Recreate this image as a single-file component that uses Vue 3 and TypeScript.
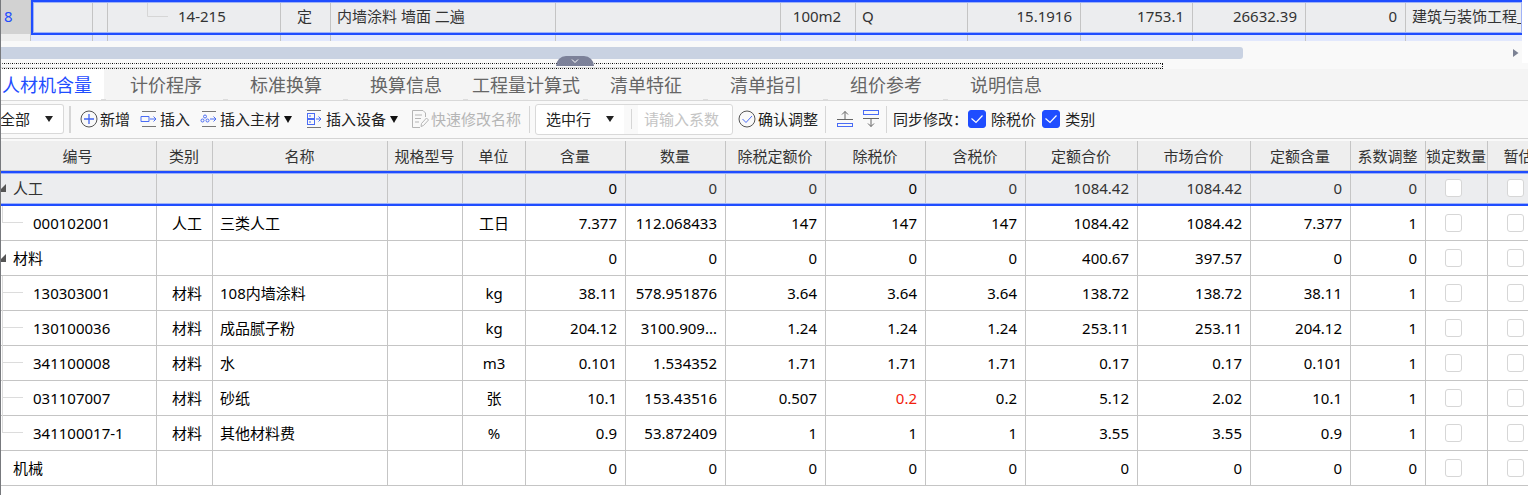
<script setup lang="ts">
import { ref } from 'vue'

interface Row {
  code: string
  group: boolean
  expanded?: boolean
  last?: boolean
  kind: string
  name: string
  unit: string
  values: string[]
}

const topCells = [
  { text: '', cls: 'w62' },
  { text: '', cls: 'w15' },
  { text: '14-215', cls: 'code' },
  { text: '定', cls: 'w50 center' },
  { text: '内墙涂料 墙面 二遍', cls: 'w225' },
  { text: '', cls: 'w225' },
  { text: '100m2', cls: 'w75 center' },
  { text: 'Q', cls: 'w112' },
  { text: '15.1916', cls: 'w113 right' },
  { text: '1753.1', cls: 'w112 right' },
  { text: '26632.39', cls: 'w113 right' },
  { text: '0', cls: 'w100 right' },
  { text: '建筑与装饰工程_', cls: 'rest' },
]

const tabs = ['人材机含量', '计价程序', '标准换算', '换算信息', '工程量计算式', '清单特征', '清单指引', '组价参考', '说明信息']
const active = ref('人材机含量')

const widths = [157, 56, 175, 75, 63, 100, 100, 100, 100, 100, 112, 113, 100, 75, 62, 63]
const heads = ['编号', '类别', '名称', '规格型号', '单位', '含量', '数量', '除税定额价', '除税价', '含税价', '定额合价', '市场合价', '定额含量', '系数调整', '锁定数量', '暂估']

const rows = ref<Row[]>([
  { code: '人工', group: true, expanded: true, kind: '', name: '', unit: '', values: ['0', '0', '0', '0', '0', '1084.42', '1084.42', '0', '0'] },
  { code: '000102001', group: false, last: true, kind: '人工', name: '三类人工', unit: '工日', values: ['7.377', '112.068433', '147', '147', '147', '1084.42', '1084.42', '7.377', '1'] },
  { code: '材料', group: true, expanded: true, kind: '', name: '', unit: '', values: ['0', '0', '0', '0', '0', '400.67', '397.57', '0', '0'] },
  { code: '130303001', group: false, kind: '材料', name: '108内墙涂料', unit: 'kg', values: ['38.11', '578.951876', '3.64', '3.64', '3.64', '138.72', '138.72', '38.11', '1'] },
  { code: '130100036', group: false, kind: '材料', name: '成品腻子粉', unit: 'kg', values: ['204.12', '3100.909...', '1.24', '1.24', '1.24', '253.11', '253.11', '204.12', '1'] },
  { code: '341100008', group: false, kind: '材料', name: '水', unit: 'm3', values: ['0.101', '1.534352', '1.71', '1.71', '1.71', '0.17', '0.17', '0.101', '1'] },
  { code: '031107007', group: false, kind: '材料', name: '砂纸', unit: '张', values: ['10.1', '153.43516', '0.507', '0.2', '0.2', '5.12', '2.02', '10.1', '1'] },
  { code: '341100017-1', group: false, last: true, kind: '材料', name: '其他材料费', unit: '%', values: ['0.9', '53.872409', '1', '1', '1', '3.55', '3.55', '0.9', '1'] },
  { code: '机械', group: true, kind: '', name: '', unit: '', values: ['0', '0', '0', '0', '0', '0', '0', '0', '0'] },
])

const syncPrice = ref(true)
const syncKind = ref(true)
</script>

<template>
  <main class="app">
    <section class="upper">
      <div class="sheet">
        <div class="gutter"><div class="rowno">8</div></div>
        <div class="track">
          <div class="line selected">
            <div v-for="(c, i) in topCells" :key="i" class="cell" :class="c.cls">
              <svg v-if="i === 2" class="branch" width="21" height="16" viewBox="0 0 21 16"><path d="M.5 0V15.500H21" fill="none" stroke="#d6d6d6" /></svg>
              <span>{{ c.text }}</span>
            </div>
          </div>
          <div class="line next">
            <div v-for="(c, i) in topCells" :key="i" class="cell" :class="c.cls"></div>
          </div>
        </div>
      </div>
      <div class="hscroll">
        <div class="thumb"></div>
        <svg width="6" height="8" viewBox="0 0 6 8"><path d="M0 0L5.500 4L0 8Z" fill="#7c8294" /></svg>
      </div>
    </section>

    <div class="splitter">
      <div class="dots"></div>
      <button class="collapse" type="button" aria-label="收起">
        <svg width="8" height="5" viewBox="0 0 8 5"><path d="M1 .5L4 3.500L7 .5" fill="none" stroke="#fff" /></svg>
      </button>
    </div>

    <nav class="tabs">
      <button v-for="t in tabs" :key="t" type="button" class="tab" :class="{ on: t === active }" @click="active = t">{{ t }}</button>
    </nav>

    <div class="toolbar">
      <div class="select filter">
        <select aria-label="类别筛选"><option>全部</option></select>
        <svg width="8" height="6" viewBox="0 0 8 6"><path d="M0 0H8L4 6Z" fill="#222" /></svg>
      </div>
      <i class="sep thick"></i>
      <button type="button" class="tool add">
        <svg width="18" height="18" viewBox="0 0 18 18" fill="none"><circle cx="9" cy="9" r="8" stroke="#555" /><path d="M9 4V14M4 9H14" stroke="#3f63f2" stroke-width="1.300" /></svg>新增
      </button>
      <button type="button" class="tool ins">
        <svg width="18" height="18" viewBox="0 0 18 18" fill="none"><path d="M2 1.500H16M2 16.500H16" stroke="#777" /><path d="M1 6.500H9V11.500H1ZM10 9H16M13.500 6.500L16 9L13.500 11.500" stroke="#4a6cf5" /></svg>插入
      </button>
      <button type="button" class="tool main">
        <svg width="18" height="18" viewBox="0 0 18 18" fill="none"><path d="M2 1.500H16M2 16.500H16" stroke="#777" /><g stroke="#4a6cf5"><circle cx="5" cy="6.500" r="1.500" /><circle cx="2.500" cy="10.500" r="1.500" /><circle cx="7.500" cy="10.500" r="1.500" /><path d="M10 9H16M13.500 6.500L16 9L13.500 11.500" /></g></svg>插入主材
        <svg class="caret" width="8" height="7" viewBox="0 0 8 7"><path d="M0 0H8L4 7Z" fill="#111" /></svg>
      </button>
      <button type="button" class="tool equip">
        <svg width="18" height="18" viewBox="0 0 18 18" fill="none"><path d="M1 .5H15M1 17.500H15" stroke="#777" /><g stroke="#4a6cf5"><rect x="1.500" y="3.500" width="7" height="5" /><rect x="1.500" y="9.500" width="7" height="5" /><path d="M3 6H5M3 12H5M10 9H15M12.500 6.500L15 9L12.500 11.500" /></g></svg>插入设备
        <svg class="caret" width="8" height="7" viewBox="0 0 8 7"><path d="M0 0H8L4 7Z" fill="#111" /></svg>
      </button>
      <button type="button" class="tool quick" disabled>
        <svg width="18" height="18" viewBox="0 0 18 18" fill="none" stroke="#b5b5b5"><path d="M14.500 7V3L12 .5H1.500V17.500H9M4 5H11M4 8.500H10M4 12H8M10 16.500L10.500 13.500L15.500 8L17.500 10L12.500 15.500Z" /></svg>快速修改名称
      </button>
      <i class="sep"></i>
      <div class="adjust">
        <div class="select scope">
          <select aria-label="调整范围"><option>选中行</option></select>
          <svg width="8" height="6" viewBox="0 0 8 6"><path d="M0 0H8L4 6Z" fill="#222" /></svg>
        </div>
        <div class="gap"><i></i></div>
        <input class="factor" type="text" placeholder="请输入系数" aria-label="系数" />
      </div>
      <button type="button" class="tool confirm">
        <svg width="18" height="18" viewBox="0 0 18 18" fill="none"><circle cx="9" cy="9" r="8" stroke="#555" /><path d="M4.500 9L8 12.500L14 6" stroke="#4a6cf5" /></svg>确认调整
      </button>
      <i class="sep"></i>
      <button type="button" class="icon" aria-label="上移">
        <svg width="16" height="18" viewBox="0 0 16 18" fill="none"><path d="M8 9V1.500M5 4.500L8 1.500L11 4.500M0 9.500H16" stroke="#666" /><rect x=".5" y="13.500" width="15" height="3" stroke="#4a6cf5" /></svg>
      </button>
      <button type="button" class="icon down" aria-label="下移">
        <svg width="16" height="18" viewBox="0 0 16 18" fill="none"><path d="M8 9V16.500M5 13.500L8 16.500L11 13.500M0 8.500H16" stroke="#666" /><rect x=".5" y=".5" width="15" height="4" stroke="#4a6cf5" /></svg>
      </button>
      <i class="sep"></i>
      <span class="sync">同步修改：</span>
      <label class="check"><input v-model="syncPrice" type="checkbox" /><svg width="18" height="18" viewBox="0 0 18 18"><path d="M3.500 8.500L8 12.500L14.500 5.500" fill="none" stroke="#fff" stroke-width="1.200" /></svg>除税价</label>
      <label class="check"><input v-model="syncKind" type="checkbox" /><svg width="18" height="18" viewBox="0 0 18 18"><path d="M3.500 8.500L8 12.500L14.500 5.500" fill="none" stroke="#fff" stroke-width="1.200" /></svg>类别</label>
    </div>

    <section class="lower">
      <table>
        <colgroup><col v-for="(w, i) in widths" :key="i" :style="{ width: w + 'px' }" /></colgroup>
        <thead>
          <tr><th v-for="h in heads" :key="h" scope="col">{{ h }}</th></tr>
        </thead>
        <tbody>
          <tr v-for="(r, n) in rows" :key="r.code" :class="{ current: n === 0 }">
            <td :class="r.group ? 'group' : 'leaf'">
              <svg v-if="r.expanded" class="fold" width="6" height="8" viewBox="0 0 6 8"><path d="M6 0V8H0V6Z" fill="#555" /></svg>
              <i v-if="!r.group" class="stem" :class="{ end: r.last }"></i>
              {{ r.code }}
            </td>
            <td class="kind">{{ r.kind }}</td>
            <td class="name">{{ r.name }}</td>
            <td></td>
            <td class="center">{{ r.unit }}</td>
            <td v-for="(v, i) in r.values" :key="i" class="num" :class="{ red: r.name === '砂纸' && i === 3, strong: i === 0 || i === 3 }">{{ v }}</td>
            <td class="tick"><input type="checkbox" :aria-label="r.code + ' 锁定数量'" /></td>
            <td class="tick"><input type="checkbox" :aria-label="r.code + ' 暂估'" /></td>
          </tr>
        </tbody>
      </table>
    </section>
  </main>
</template>

<style>
body { background: #fff; }
#app { overflow: hidden; }
</style>

<style scoped>
* { box-sizing: border-box; }
.app {
  position: relative;
  min-height: 100vh;
  overflow: hidden;
  background: #fff;
  color: #222;
  font: 15px/20px "Noto Sans", "Noto Sans CJK SC", sans-serif;
}
.app::before {
  content: "";
  position: absolute;
  z-index: 5;
  inset: 0 auto 0 0;
  width: 1px;
  background: #77797d;
}
button, input, select { font: inherit; color: inherit; }
button { padding: 0; border: 0; background: none; white-space: nowrap; }

.upper { padding-right: 6px; background: #fff; }
.sheet { display: flex; height: 41px; }
.gutter { flex: none; width: 31px; border-right: 1px solid #c4c4c4; background: #eee; }
.rowno {
  height: 34px;
  padding: 6px 0 0 4px;
  background: #d2d2d2;
  color: #1f4dff;
}
.track { flex: 1; min-width: 0; }
.line { display: flex; }
.selected {
  position: relative;
  height: 35px;
  background: #ecedef;
  color: #333;
}
.selected::after {
  content: "";
  position: absolute;
  inset: 0;
  border: 2px solid #1f4dff;
  border-right: 0;
  box-shadow: inset 0 0 0 1px #9fb2f7;
}
.next { height: 6px; background: #e2e8fd; }
.cell {
  position: relative;
  flex: none;
  padding: 6px 8px 0 6px;
  border-right: 1px solid #c4c4c4;
  white-space: nowrap;
  overflow: hidden;
}
.next .cell { padding: 0; }
.center { text-align: center; }
.right { text-align: right; }
.w15 { width: 15px; }
.w50 { width: 50px; }
.w62 { width: 62px; }
.w75 { width: 75px; }
.w100 { width: 100px; }
.w112 { width: 112px; }
.w113 { width: 113px; }
.w225 { width: 225px; }
.code { width: 173px; padding-left: 70px; }
.rest { flex: 1; padding-right: 0; border: 0; }
.branch { position: absolute; left: 39px; top: 1px; }
.hscroll {
  display: flex;
  align-items: center;
  justify-content: space-between;
  height: 22px;
  padding: 2px 3px 0 0;
  background: #f9f9f9;
}
.thumb { width: 81.8%; height: 12px; border-radius: 0 3px 3px 0; background: #c9d2e2; }

.splitter { position: relative; height: 6px; background: #f9f9f9; }
.dots {
  width: 1163px;
  height: 6px;
  border-right: 1px dotted #111;
  background:
    repeating-linear-gradient(90deg, #000 0 1px, #f9f9f9 1px 2px, #666 2px 3px, #f9f9f9 3px 4px) 0 0 / 100% 1px no-repeat,
    repeating-linear-gradient(90deg, #000 0 1px, #f4f4f4 1px 2px, #666 2px 3px, #f4f4f4 3px 4px) 0 100% / 100% 1px no-repeat,
    linear-gradient(#dedede, #dedede) 0 4px / 100% 1px no-repeat;
}
.collapse {
  position: absolute;
  left: 556px;
  bottom: 3px;
  display: flex;
  justify-content: center;
  align-items: center;
  width: 38px;
  height: 10px;
  border-radius: 12px 12px 0 0;
  background: #7c8199;
}

.tabs {
  display: flex;
  height: 32px;
  border-bottom: 1px solid #d9d9d9;
  background: #f4f4f4;
}
.tab {
  position: relative;
  width: 120px;
  font-size: 18px;
  line-height: 28px;
  color: #666;
}
.tab:not(:last-child)::after {
  content: "";
  position: absolute;
  right: -2px;
  bottom: 0;
  width: 5px;
  height: 1px;
  background: #dcdcdc;
}
.tab.on { width: 104px; padding-right: 10px; background: #fff; color: #1f4dff; }
.tab.on + .tab { margin-left: 2px; }

.toolbar {
  display: flex;
  align-items: center;
  height: 38px;
  padding-bottom: 1px;
  border-bottom: 1px solid #d4d4d4;
  background: #f9f9f9;
  color: #222;
}
.select { position: relative; display: flex; align-items: center; }
.select select {
  width: 100%;
  height: 100%;
  appearance: none;
  border: 0;
  background: none;
  outline: 0;
}
.select svg { position: absolute; right: 10px; pointer-events: none; }
.filter { width: 64px; height: 30px; border: 1px solid #d9d9d9; border-left: 0; border-radius: 0 3px 3px 0; background: #fff; }
.filter select { padding: 0; }
.sep { flex: none; width: 1px; height: 27px; background: #d6d6d6; }
.sep.thick { width: 2px; margin: 0 9px 0 5px; }
.tool { display: flex; align-items: center; gap: 2px; flex: none; }
.ins, .main { margin-left: 10px; }
.equip { margin-left: 14px; }
.quick { margin: 0 8px 0 13px; color: #b5b5b5; }
.caret { margin-left: 2px; }
.adjust {
  display: flex;
  width: 198px;
  height: 31px;
  margin: 0 5px;
  border: 1px solid #d9d9d9;
  border-radius: 3px;
  background: #fff;
}
.scope { width: 88px; }
.scope select { padding: 0 0 0 10px; }
.gap { display: flex; justify-content: center; align-items: center; width: 14px; background: #f9f9f9; }
.gap i { width: 1px; height: 20px; background: #d6d6d6; }
.factor { flex: 1; min-width: 0; padding: 0 0 0 6px; border: 0; background: none; outline: 0; }
.factor::placeholder { color: #c4c4c4; opacity: 1; }
.confirm { margin-right: 7px; }
.icon { display: flex; margin-left: 11px; }
.icon.down { margin: 0 7px 0 10px; }
.sync { margin-left: 6px; }
.check { position: relative; display: flex; align-items: center; gap: 5px; }
.check + .check { margin-left: 6px; }
.check input { appearance: none; width: 18px; height: 18px; margin: 0; border: 1px solid #ccc; border-radius: 3px; background: #fff; }
.check input:checked { border-color: #1f4dff; background: #1f4dff; }
.check svg { position: absolute; left: 0; pointer-events: none; }

.lower { padding-top: 2px; overflow: hidden; background: #f9f9f9; }
table { width: 1551px; table-layout: fixed; border-collapse: separate; border-spacing: 0; background: #fff; }
th, td {
  padding: 0;
  border: 0 solid #c5c5c5;
  border-width: 0 1px 1px 0;
  white-space: nowrap;
}
th { height: 30px; padding-right: 1px; background: #eee; color: #333; font-weight: 400; }
td { position: relative; height: 35px; color: #000; }
.current td { background: #ecedef; color: #333; }
.current td.strong { color: #000; }
.current td::after {
  content: "";
  position: absolute;
  inset: 0 -1px -1px 0;
  border: 0 solid #1f4dff;
  border-width: 2px 0;
  box-shadow: inset 0 1px #9fb2f7, inset 0 -1px #9fb2f7;
  pointer-events: none;
}
.group { padding-left: 13px; }
.leaf { padding-left: 33px; }
.kind { padding-left: 15px; }
.name { padding-left: 7px; }
.num { padding-right: 8px; text-align: right; }
td.red { color: #f2210d; }
.fold { position: absolute; left: 0; top: 13px; }
.stem { position: absolute; left: 2px; top: 0; width: 20px; height: 35px; border-left: 1px solid #dcdcdc; }
.stem.end { height: 17px; }
.stem::after { content: ""; position: absolute; left: 0; top: 16px; width: 20px; height: 1px; background: #dcdcdc; }
.tick input {
  display: block;
  appearance: none;
  width: 17px;
  height: 18px;
  margin: 0 0 0 19px;
  border: 1px solid #d6d6d6;
  border-radius: 3px;
  background: #fff;
}
</style>
